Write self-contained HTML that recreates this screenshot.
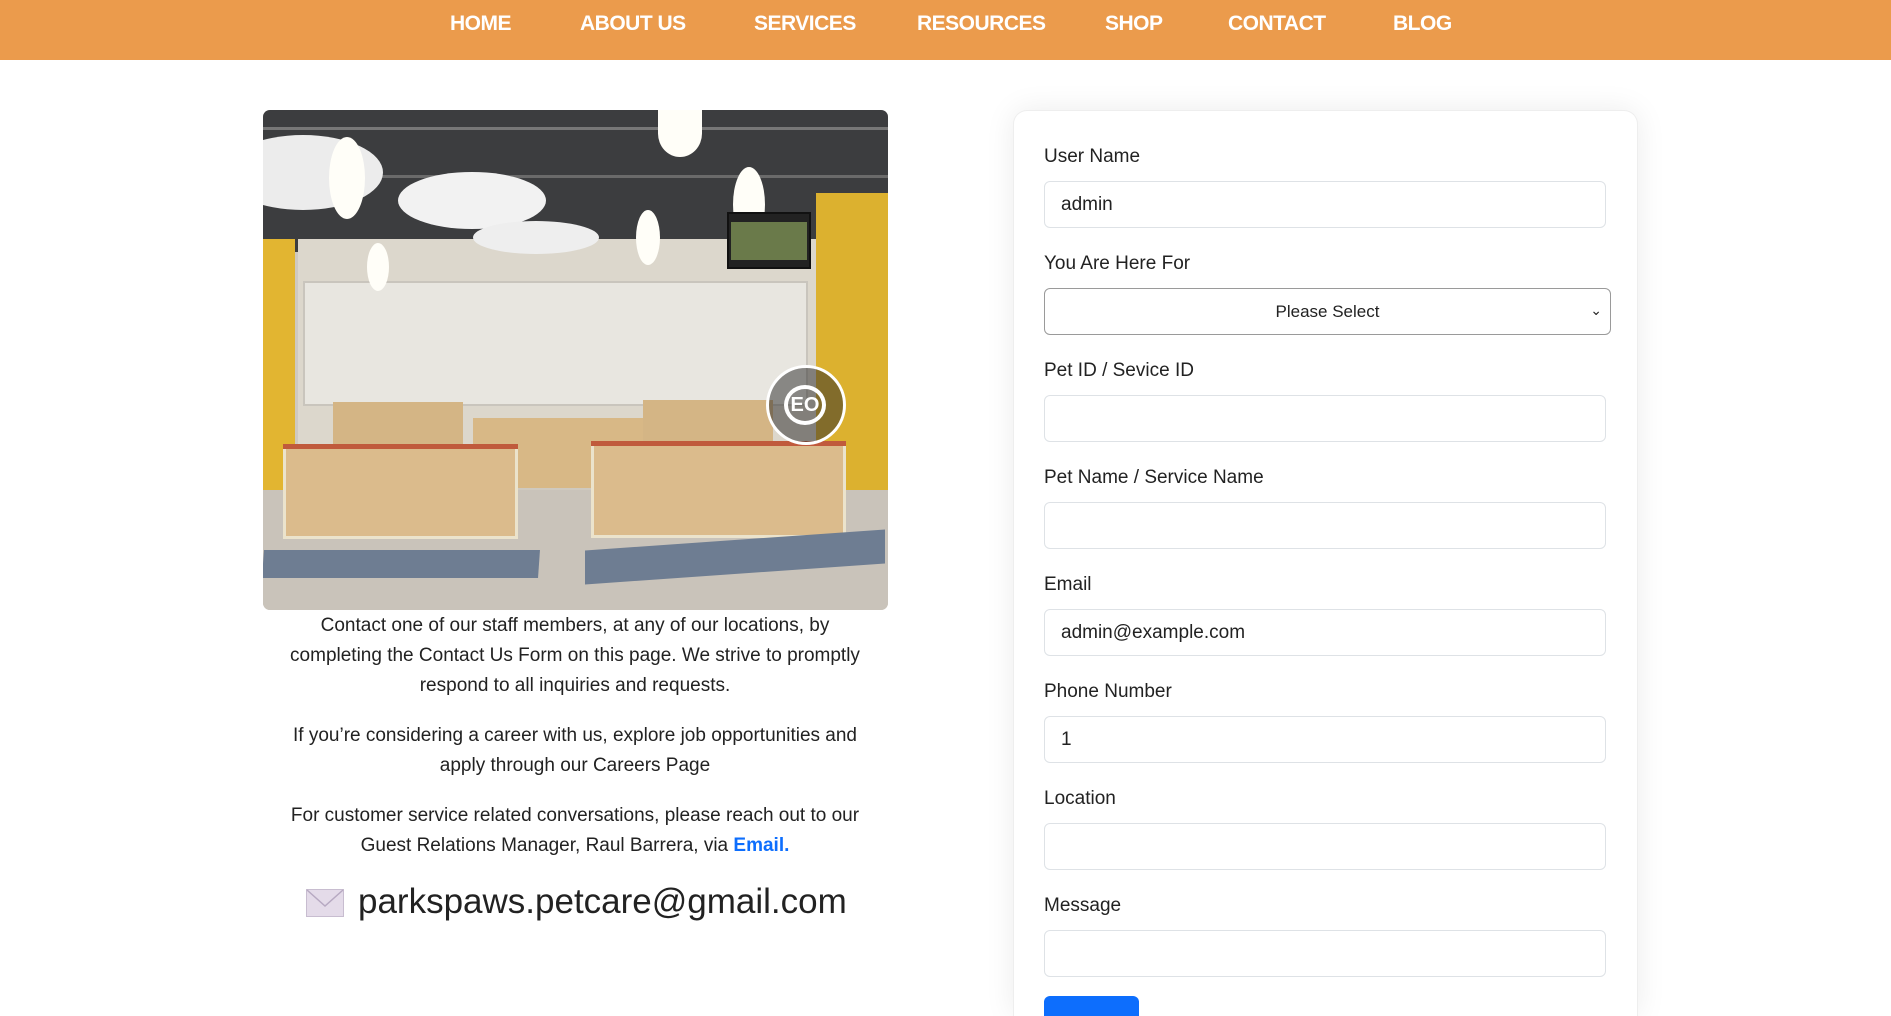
<!DOCTYPE html>
<html><head><meta charset="utf-8"><style>
*{box-sizing:border-box;margin:0;padding:0}
html,body{width:1891px;height:1016px;overflow:hidden}
body{background:#fff;font-family:"Liberation Sans",sans-serif;color:#212529;position:relative}
.nav{position:absolute;left:0;top:0;width:1891px;height:60px;background:#EB9B4C}
.nav span{position:absolute;top:12px;color:#fff;font-weight:bold;font-size:21px;letter-spacing:-0.5px}
.img{position:absolute;left:263px;top:110px;width:625px;height:500px;border-radius:7px;overflow:hidden;background:#cfc9bf}
.img div{position:absolute}
.txt{position:absolute;left:285px;width:580px;text-align:center;font-size:19px;line-height:30px;color:#222}
.card{position:absolute;left:1013px;top:110px;width:625px;height:906px;border-radius:14px 14px 0 0;border:1px solid #eee;border-bottom:none;box-shadow:0 0 30px rgba(0,0,0,0.08);background:#fff}
.lbl{position:absolute;left:1044px;font-size:19px;color:#222}
.inp{position:absolute;left:1044px;width:562px;height:47px;border:1px solid #dee2e6;border-radius:6px;font-size:19px;padding:12px 16px;color:#222;line-height:22px}
</style></head><body>
<div class="nav">
<span style="left:450px">HOME</span><span style="left:580px">ABOUT US</span><span style="left:754px">SERVICES</span><span style="left:917px">RESOURCES</span><span style="left:1105px">SHOP</span><span style="left:1228px">CONTACT</span><span style="left:1393px">BLOG</span>
</div>
<div class="img">
<div style="left:0;top:0;width:625px;height:142px;background:#3c3d3f"></div>
<div style="left:0;top:17px;width:625px;height:3px;background:#777"></div>
<div style="left:0;top:65px;width:625px;height:3px;background:#6a6a6a"></div>
<div style="left:35px;top:129px;width:525px;height:225px;background:#dcd7cc"></div>
<div style="left:40px;top:171px;width:505px;height:125px;background:#e8e6e0;border:2px solid #c9c5bd"></div>
<div style="left:0;top:129px;width:32px;height:279px;background:#e2b531"></div>
<div style="left:553px;top:83px;width:72px;height:317px;background:#dcb12f"></div>
<div style="left:-40px;top:25px;width:160px;height:75px;border-radius:50%;background:#ececec"></div>
<div style="left:135px;top:62px;width:148px;height:57px;border-radius:50%;background:#f2f2f2"></div>
<div style="left:210px;top:111px;width:126px;height:33px;border-radius:50%;background:#eeeeee"></div>
<div style="left:66px;top:27px;width:36px;height:82px;border-radius:50%;background:#fffef8"></div>
<div style="left:104px;top:133px;width:22px;height:48px;border-radius:50%;background:#fffef8"></div>
<div style="left:373px;top:100px;width:24px;height:55px;border-radius:50%;background:#fffef8"></div>
<div style="left:470px;top:57px;width:32px;height:75px;border-radius:50%;background:#fffef8"></div>
<div style="left:395px;top:0;width:44px;height:47px;border-radius:0 0 50% 50%;background:#fffef8"></div>
<div style="left:464px;top:102px;width:84px;height:57px;background:#222;border:2px solid #111"></div>
<div style="left:468px;top:112px;width:76px;height:38px;background:#6a7a4a"></div>
<div style="left:70px;top:292px;width:130px;height:50px;background:#d4b585"></div>
<div style="left:380px;top:290px;width:130px;height:50px;background:#d4b585"></div>
<div style="left:210px;top:308px;width:170px;height:70px;background:#d8b886"></div>
<div style="left:0;top:380px;width:625px;height:120px;background:#c9c3ba"></div>
<div style="left:20px;top:336px;width:235px;height:93px;background:#dbbb8c;border:3px solid #ebe3cc"></div>
<div style="left:20px;top:334px;width:235px;height:5px;background:#c05a3c"></div>
<div style="left:328px;top:333px;width:255px;height:95px;background:#dbbb8c;border:3px solid #ebe3cc"></div>
<div style="left:328px;top:331px;width:255px;height:5px;background:#c05a3c"></div>
<div style="left:0;top:440px;width:276px;height:28px;background:#6e7d92;transform:skewX(-4deg)"></div>
<div style="left:322px;top:430px;width:300px;height:34px;background:#6e7d92;transform:skewY(-4deg)"></div>
<div style="left:503px;top:255px;width:80px;height:80px;border-radius:50%;border:3px solid #fff;background:rgba(40,40,40,.5)"></div>
<div style="left:521px;top:275px;width:42px;height:40px;border-radius:50%;border:4px solid #fff;color:#fff;font-weight:bold;font-size:20px;text-align:center;line-height:32px">EO</div>
</div>
<div class="txt" style="top:611px">Contact one of our staff members, at any of our locations, by completing the Contact Us Form on this page. We strive to promptly respond to all inquiries and requests.</div>
<div class="txt" style="top:721px">If you’re considering a career with us, explore job opportunities and apply through our Careers Page</div>
<div class="txt" style="top:801px">For customer service related conversations, please reach out to our Guest Relations Manager, Raul Barrera, via <b style="color:#0d6efd">Email.</b></div>
<svg style="position:absolute;left:306px;top:889px" width="38" height="28" viewBox="0 0 38 28"><rect x="0.5" y="0.5" width="37" height="27" fill="#e4dbe9" stroke="#c8bdd0"/><path d="M1 1 L19 17 L37 1" fill="none" stroke="#b7a9c2" stroke-width="1.5"/></svg>
<div style="position:absolute;left:358px;top:882px;font-size:35px;color:#222">parkspaws.petcare@gmail.com</div>
<div class="card"></div>
<div class="lbl" style="top:146px">User Name</div>
<div class="inp" style="top:181px">admin</div>
<div class="lbl" style="top:253px">You Are Here For</div>
<div class="inp" style="top:288px;width:567px;border-color:#9a9a9a;text-align:center;font-size:17px">Please Select<span style="position:absolute;right:8px;top:10px;font-size:14px">&#8964;</span></div>
<div class="lbl" style="top:360px">Pet ID / Sevice ID</div>
<div class="inp" style="top:395px"></div>
<div class="lbl" style="top:467px">Pet Name / Service Name</div>
<div class="inp" style="top:502px"></div>
<div class="lbl" style="top:574px">Email</div>
<div class="inp" style="top:609px">admin@example.com</div>
<div class="lbl" style="top:681px">Phone Number</div>
<div class="inp" style="top:716px">1</div>
<div class="lbl" style="top:788px">Location</div>
<div class="inp" style="top:823px"></div>
<div class="lbl" style="top:895px">Message</div>
<div class="inp" style="top:930px"></div>
<div style="position:absolute;left:1044px;top:996px;width:95px;height:20px;background:#0d6efd;border-radius:6px 6px 0 0"></div>
</body></html>
